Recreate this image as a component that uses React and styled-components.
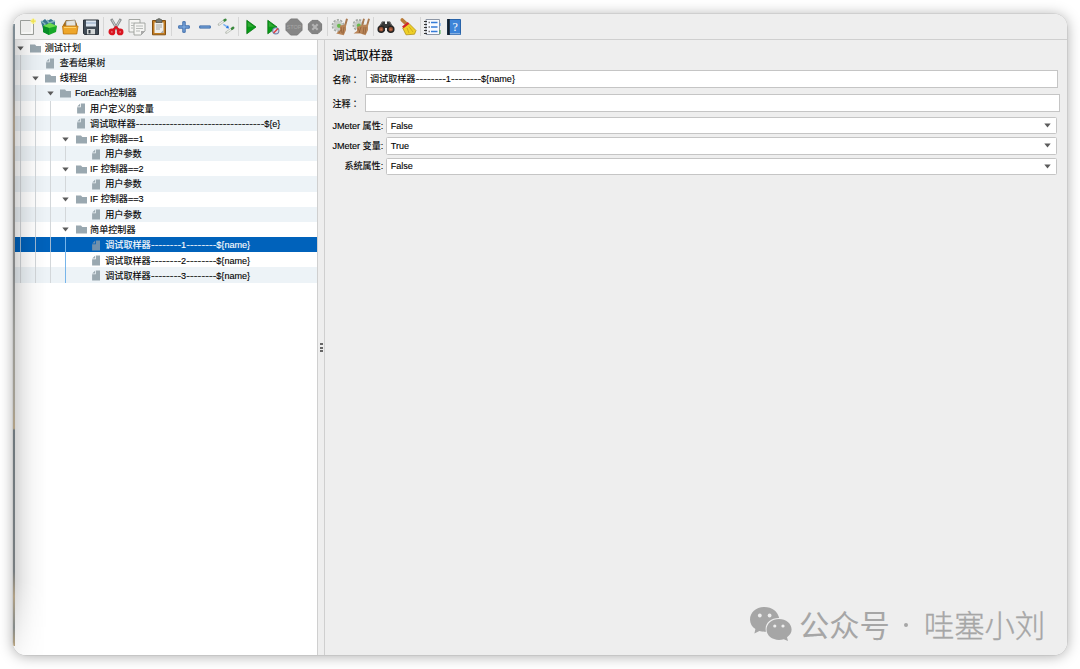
import React from "react";
import styled, { createGlobalStyle } from "styled-components";

const Global = createGlobalStyle`
  * { box-sizing: border-box; }
  body { margin: 0; background: #fff; overflow: hidden; }
`;

const Desktop = styled.div`
  width: 1080px;
  height: 669px;
  padding: 14px 13px 13.5px 13px;
  overflow: hidden;
  font: 9.1px/15px "Liberation Sans", "Noto Sans CJK SC", sans-serif;
  -webkit-text-stroke: 0.12px currentColor;
  color: #000;
`;

const Window = styled.div`
  position: relative;
  width: 1054px;
  height: 641px;
  border-radius: 13px;
  overflow: hidden;
  background: #eee;
  display: flex;
  flex-direction: column;
`;

const Shadow = styled.div`
  border-radius: 13px;
  box-shadow: 0 0 0 0.5px rgba(0, 0, 0, 0.1), 0 1px 14px rgba(0, 0, 0, 0.34);
`;

const EdgeShade = styled.div`
  position: absolute;
  inset: 26px auto 0 0;
  width: 34px;
  pointer-events: none;
  background: linear-gradient(90deg, rgba(0, 0, 0, 0.17) 2px, rgba(0, 0, 0, 0.09) 10px, rgba(0, 0, 0, 0.03) 20px, transparent);
  mask-image: linear-gradient(#000 88%, rgba(0, 0, 0, 0.2));
`;

const EdgeStrip = styled.div`
  position: absolute;
  inset: 10px auto 9px 0;
  width: 2px;
  background: linear-gradient(#7d8b93, #858b90 10%, #a39684 16%, #8c8984 26%, #858788 40%, #9b9b96 50%, #a39e92 61%, #b0a084 65%, #6e777c 65.3%, #777d80 88%, #b0a084 92%, #858b8b 97%, #b5a17d);
`;

const Toolbar = styled.div`
  height: 26px;
  flex: none;
  display: flex;
  align-items: center;
  padding-left: 3.6px;
  border-bottom: 1px solid #cfcfcf;
`;

const Tool = styled.div`
  width: 21.35px;
  height: 20px;
  flex: none;
  display: flex;
  align-items: center;
  justify-content: center;
  svg { width: 18px; height: 18px; display: block; overflow: visible; }
`;

const Separator = styled.div`
  width: 1px;
  height: 19px;
  flex: none;
  background: #d6d6d6;
  margin: 0 1.25px;
`;

const Body = styled.div`
  flex: 1;
  display: flex;
  min-height: 0;
`;

const Tree = styled.div`
  width: 305px;
  flex: none;
  background: #fff;
  border-right: 1px solid #cfcfcf;
`;

const Row = styled.div`
  height: 15.17px;
  display: flex;
  align-items: center;
  padding-left: 2px;
  white-space: pre;
  background: ${(p) => (p.$selected ? "#0062bb" : p.$striped ? "#edf3f7" : "#fff")};
  color: ${(p) => (p.$selected ? "#fff" : "#000")};
`;

const Guide = styled.span`
  width: 15.15px;
  align-self: stretch;
  flex: none;
  padding-left: 5px;
  display: flex;
  &::before {
    content: "";
    width: 1px;
    background: ${(p) => (p.$active ? "#77b5ea" : p.$selected ? "#9fb9d2" : "#d3d7da")};
  }
`;

const Toggle = styled.span`
  width: 15.15px;
  flex: none;
  display: flex;
  padding: 1px 0 0 2px;
`;

const NodeIcon = styled.span`
  width: 14.5px;
  flex: none;
  display: flex;
  padding-top: 1px;
  svg { display: block; }
`;

const Dashes = styled.span`
  font-family: Inter, sans-serif;
  letter-spacing: -0.4px;
`;

const Name = styled.span`
  padding-top: 1.6px;
`;

const Splitter = styled.div`
  width: 7px;
  flex: none;
  border-right: 1px solid #cfcfcf;
  display: flex;
  flex-direction: column;
  align-items: center;
  justify-content: center;
  gap: 1.4px;
  background: #eee;
`;

const Grip = styled.i`
  width: 3px;
  height: 2px;
  background: #666;
`;

const Panel = styled.div`
  flex: 1;
  padding: 7px 0 0 7.4px;
  display: flex;
  flex-direction: column;
`;

const Title = styled.h1`
  margin: 0;
  padding-top: 1px;
  font-size: 12.1px;
  line-height: 17px;
  font-weight: 400;
  height: 23px;
`;

const Field = styled.div`
  display: flex;
  align-items: center;
  height: 18px;
  margin-bottom: ${(p) => p.$below}px;
`;

const Label = styled.label`
  width: ${(p) => p.$w}px;
  flex: none;
  white-space: pre;
  letter-spacing: -0.03px;
  padding-top: 1px;
  text-align: ${(p) => (p.$right ? "right" : "left")};
  padding-right: ${(p) => (p.$right ? 3 : 0)}px;
`;

const Colon = styled.span`
  font-family: "Noto Sans CJK TC", sans-serif;
`;

const Input = styled.div`
  width: ${(p) => p.$w}px;
  height: 18px;
  border: 1px solid #c5c5c5;
  background: #fff;
  padding-left: 3px;
  line-height: 16px;
  white-space: pre;
`;

const Select = styled.div`
  width: 671px;
  height: 17.5px;
  border: 1px solid #c5c5c5;
  border-radius: 1.5px;
  background: #fff;
  padding: 1px 5px 0 3.5px;
  display: flex;
  align-items: center;
  justify-content: space-between;
  svg { margin-top: -1px; }
`;

const Watermark = styled.div`
  position: absolute;
  left: 735.5px;
  top: 589px;
  display: flex;
  align-items: center;
  color: #a6a6a6;
  font: 30.3px/42px "Noto Sans CJK SC", sans-serif;
  -webkit-text-stroke: 0;
  white-space: pre;
  svg { display: block; margin-right: 7.5px; }
`;

const Dot = styled.span`
  width: 34px;
  display: flex;
  justify-content: center;
  padding-top: 2px;
  &::before {
    content: "";
    width: 4px;
    height: 4px;
    border-radius: 50%;
    background: currentColor;
    margin-right: 2px;
  }
`;

const Nick = styled.span`
  font-weight: 300;
  -webkit-text-stroke: 0.35px currentColor;
`;

const Arrow = () => (
  <svg width="7" height="5" viewBox="0 0 7 5"><path d="M.3 .4H6.7L3.5 4.6Z" fill="#5c5c5c" /></svg>
);

const Folder = () => (
  <svg width="11" height="9" viewBox="0 0 11 9"><path d="M0 .5H5L6.3 2H11V8.5H0Z" fill="#9aa8b0" /></svg>
);

const Page = ({ selected }) => (
  <svg width="11" height="11" viewBox="0 0 11 11">
    <path d="M4.8 .4H9V10.4H1.1V4.3H4.8Z" fill={selected ? "#7191ac" : "#9aa8b0"} />
    <path d="M4 .7V3.5H1.2Z" fill={selected ? "#7191ac" : "#9aa8b0"} />
  </svg>
);

const icons = {
  blank: <svg viewBox="0 0 18 18"><path d="M2.5 2.5H15.5V16.5H2.5Z" fill="#ececea" stroke="#999c98" /><path d="M4 15H14V5" fill="none" stroke="#fff" /><circle cx="15.2" cy="3.2" r="2.7" fill="#f8f4ad" /><path d="M15.2 .8V5.6M12.8 3.2H17.6" stroke="#eddf48" strokeWidth="1.2" /></svg>,
  templates: <svg viewBox="0 0 18 18"><path d="M1 4 5 1 7 3 11 1 15 4V10L8 13 3 11Z" fill="#39758d" /><path d="M1 3 5 6 4 11M7 2 9 5 15 3" stroke="#84b4bd" strokeWidth="1.5" fill="none" /><path d="M3 8 10 5 17 8 16 14 9 17 3 14Z" fill="#17a829" /><path d="M3 8 9 10 17 8 10 5Z" fill="#6eda4f" /><path d="M9 10V17L3 14V8Z" fill="#078d27" /></svg>,
  open: <svg viewBox="0 0 18 18"><path d="M2 7 5 2H14L16 6V16H2Z" fill="#a86c16" /><path d="M5 3 14 2 15 9H5Z" fill="#e4e4e0" stroke="#8d8980" strokeWidth=".7" /><path d="M1.5 8H17L15.8 16H2.4Z" fill="#eea62a" stroke="#ba7410" strokeWidth=".8" /><path d="M3 9.5H15" stroke="#ffd36a" /></svg>,
  save: <svg viewBox="0 0 18 18"><path d="M1.5 2H16.5V16.5H2.5L1.5 15.3Z" fill="#414b55" stroke="#2b333b" /><path d="M4 2.4H14V8.6H4Z" fill="#dce5ee" /><path d="M4 5H14" stroke="#8da6c4" /><path d="M5 11H13V16.3H5Z" fill="#d4d8d8" /><path d="M6.5 12H8.5V15.5H6.5Z" fill="#303840" /></svg>,
  cut: <svg viewBox="0 0 18 18"><path d="M4.2 1 10.7 12M13.8 1 7.3 12" stroke="#8e9494" strokeWidth="2.6" /><path d="M5 2 10 11M13 2 8 11" stroke="#e7e9e9" strokeWidth=".7" /><g fill="#f4d7d7" stroke="#d91520" strokeWidth="2.8"><ellipse cx="4.9" cy="13.9" rx="2" ry="2" /><ellipse cx="13.1" cy="13.9" rx="2" ry="2" /></g><path d="M6 12 9 9 12 12" stroke="#d91520" strokeWidth="2.2" fill="none" /></svg>,
  copy: <svg viewBox="0 0 18 18"><g fill="#f5f5f3" stroke="#9b9e9a" strokeWidth=".9"><path d="M1 1.5H12V14H1Z" /><path d="M6 5H17V13L13 17H6Z" /></g><path d="M3 5H6M3 7.5H6M3 10H5M8 8H15M8 10.5H15M8 13H12" stroke="#b7bab7" /><path d="M13 17V13H17Z" fill="#aaa" /></svg>,
  paste: <svg viewBox="0 0 18 18"><path d="M2.5 2.5H15.5V16.8H2.5Z" fill="#c17c20" stroke="#855012" /><path d="M4.5 4.5H13.5V15H4.5Z" fill="#eeeeeb" /><path d="M6 2 9 .5 12 2V4.5H6Z" fill="#75776f" stroke="#4d504b" strokeWidth=".7" /><path d="M6 7H12M6 9H12M6 11H10" stroke="#a6a8a4" /><path d="M13.5 12 10.5 15H13.5Z" fill="#aaa" /></svg>,
  plus: <svg viewBox="0 0 18 18"><path d="M7.8 3.7H10.2V7.8H14.3V10.2H10.2V14.3H7.8V10.2H3.7V7.8H7.8Z" fill="#79a5da" stroke="#3263a5" strokeWidth=".9" /></svg>,
  minus: <svg viewBox="0 0 18 18"><path d="M3.7 7.9H14.3V10.1H3.7Z" fill="#79a5da" stroke="#3263a5" strokeWidth=".9" /></svg>,
  toggle: <svg viewBox="0 0 18 18"><path d="M2 6.5 8 2M9.5 14.5 16 10" stroke="#b5bab2" strokeWidth="2.6" strokeLinecap="round" /><path d="M2 6.5 8 2M9.5 14.5 16 10" stroke="#eef0ec" strokeWidth="1.2" /><path d="M7.5 2.4 8.5 1.8M15 10.7 16.2 9.8" stroke="#3a8a3d" strokeWidth="2.4" strokeLinecap="round" /><path d="M6.4 6.3 11 9.4" stroke="#7bb2f1" strokeWidth="1.5" /><path d="M12 10.5 8.8 10 11 7.3Z" fill="#2874e0" /></svg>,
  start: <svg viewBox="0 0 18 18"><path d="M4.8 2.3 14 9 4.8 15.8Z" fill="#079b17" stroke="#067312" strokeWidth=".8" /><path d="M5.7 4 11.7 8.7H5.7Z" fill="#32a936" /></svg>,
  noTimers: <svg viewBox="0 0 18 18"><path d="M3.8 2.3 13 9 3.8 15.8Z" fill="#079b17" stroke="#067312" strokeWidth=".8" /><path d="M4.8 4 10.7 8.7H4.8Z" fill="#32a936" /><circle cx="11.8" cy="12.8" r="3.1" fill="#d9dfef" stroke="#6f82ab" strokeWidth="1.1" /><path d="M9.6 15 14 10.6" stroke="#df3b3b" strokeWidth="1.4" /></svg>,
  stop: <svg viewBox="0 0 18 18"><path d="M5.7 1H12.3L17 5.7V12.3L12.3 17H5.7L1 12.3V5.7Z" fill="#868686" stroke="#7c7c7c" /><text x="9" y="11.2" textAnchor="middle" fontSize="5.6" fontFamily="Liberation Sans" fill="#a6a6a6">STOP</text></svg>,
  shutdown: <svg viewBox="0 0 18 18"><path d="M6 2.4H12L15.6 6V12L12 15.6H6L2.4 12V6Z" fill="#848484" stroke="#7a7a7a" /><path d="M6.3 6.3 11.7 11.7M11.7 6.3 6.3 11.7" stroke="#b3b3b3" strokeWidth="2.2" /></svg>,
  clear: <svg viewBox="0 0 18 18"><circle cx="7" cy="7.5" r="4.8" fill="#c8ccc7" /><circle cx="7" cy="7.5" r="5.6" fill="none" stroke="#a3a8a3" strokeWidth="1.6" strokeDasharray="2.2 1.3" /><circle cx="8" cy="7.8" r="2.1" fill="#68b94e" /><path d="M16 .8 14 8" stroke="#a97950" strokeWidth="2" /><path d="M9 7.5 15 6.5V12L12.8 17.3 5.2 15.5 9 12Z" fill="#b98558" /><path d="M10 9 11 15M13 9 12 16M8 15 10 12" stroke="#84562f" strokeWidth=".6" /></svg>,
  clearAll: <svg viewBox="0 0 18 18"><circle cx="6.5" cy="7" r="4.4" fill="#c8ccc7" /><circle cx="6.5" cy="7" r="5.2" fill="none" stroke="#a3a8a3" strokeWidth="1.6" strokeDasharray="2.2 1.3" /><circle cx="6.8" cy="7.4" r="2" fill="#68b94e" /><path d="M12 .8 10 8M17 .8 15 8" stroke="#a97950" strokeWidth="1.9" /><path d="M5 9 10 7 16 6.5V12L13.5 17.3 8.5 15.5 1.5 15.5 5 13Z" fill="#b98558" /><path d="M6 10 8 15M9 9 7 15M12 9 11 16M14 9 13 16" stroke="#84562f" strokeWidth=".6" /></svg>,
  search: <svg viewBox="0 0 18 18"><path d="M5 3.5H8V6H10V3.5H13L16.8 10V13H10V10H8V13H1.2V10Z" fill="#383938" /><path d="M5.5 4 3 8M12.5 4 15 8" stroke="#777" strokeWidth=".8" /><g fill="#965033" stroke="#242424" strokeWidth="1.5"><circle cx="4.2" cy="11.3" r="3" /><circle cx="13.8" cy="11.3" r="3" /></g><g fill="#c47453"><circle cx="4.2" cy="11.5" r="1" /><circle cx="13.8" cy="11.5" r="1" /></g></svg>,
  broom: <svg viewBox="0 0 18 18"><path d="M3.2 2 7.5 6" stroke="#b97c38" strokeWidth="3.6" strokeLinecap="round" /><path d="M3.7 10 10 5.5 17 12.5 15.5 16.2 7 16.8Z" fill="#efd026" stroke="#b3921a" strokeWidth=".8" /><path d="M3.8 9.4 9.6 4.8" stroke="#d42929" strokeWidth="2.3" /><path d="M8 10 10 15M10 8.5 14 14" stroke="#b59419" strokeWidth=".6" /></svg>,
  helper: <svg viewBox="0 0 18 18"><path d="M3 1.5H16.5V16.5H3Z" fill="#f8faff" stroke="#8c96a5" /><path d="M8 4.5H14.5M8 9H14.5M8 13.5H14.5" stroke="#357bd7" strokeWidth="1.6" /><path d="M1 3.5H4M1 6.5H4M1 9.5H4M1 12.5H4M1 15.5H4" stroke="#333" /><path d="M5.5 4.5H7M5.5 9H7M5.5 13.5H7" stroke="#777" strokeWidth="1.5" /><path d="M17 5V8" stroke="#4c8ee0" /><path d="M17 12V16" stroke="#45a849" /></svg>,
  help: <svg viewBox="0 0 18 18"><path d="M2.5 1.5H15.5V16.5H2.5Z" fill="#3d84d8" stroke="#2863a9" /><path d="M3.5 1V17" stroke="#16212c" strokeWidth="2.6" /><path d="M5 15.8H15.2" stroke="#a8c4e6" /><text x="10.2" y="13" textAnchor="middle" fontSize="12" fontFamily="Liberation Serif" fill="#fff">?</text></svg>,
};

const tools = [
  "blank", "templates", "open", "save", null,
  "cut", "copy", "paste", null,
  "plus", "minus", "toggle", null,
  "start", "noTimers", "stop", "shutdown", null,
  "clear", "clearAll", null,
  "search", "broom", null,
  "helper", "help",
];

const nodes = [
  { depth: 0, folder: true, text: "测试计划" },
  { depth: 1, text: "查看结果树" },
  { depth: 1, folder: true, text: "线程组" },
  { depth: 2, folder: true, text: "ForEach控制器" },
  { depth: 3, text: "用户定义的变量" },
  { depth: 3, text: "调试取样器----------------------------------${e}" },
  { depth: 3, folder: true, text: "IF 控制器==1" },
  { depth: 4, text: "用户参数" },
  { depth: 3, folder: true, text: "IF 控制器==2" },
  { depth: 4, text: "用户参数" },
  { depth: 3, folder: true, text: "IF 控制器==3" },
  { depth: 4, text: "用户参数" },
  { depth: 3, folder: true, text: "简单控制器" },
  { depth: 4, text: "调试取样器--------1--------${name}", selected: true, active: true },
  { depth: 4, text: "调试取样器--------2--------${name}", active: true },
  { depth: 4, text: "调试取样器--------3--------${name}", active: true },
];

const NodeText = ({ children }) => (
  <Name>
    {children.split(/(-+)/).map((part, i) => (part[0] === "-" ? <Dashes key={i}>{part}</Dashes> : part))}
  </Name>
);

const TreeRow = ({ node, index }) => (
  <Row $striped={index % 2 === 1} $selected={node.selected}>
    {Array.from({ length: node.depth }, (_, i) => (
      <Guide key={i} $selected={node.selected} $active={i === 3 && node.active} />
    ))}
    <Toggle>{node.folder && <Arrow />}</Toggle>
    <NodeIcon>{node.folder ? <Folder /> : <Page selected={node.selected} />}</NodeIcon>
    <NodeText>{node.text}</NodeText>
  </Row>
);

const WeChat = () => (
  <svg width="43" height="36" viewBox="0 0 43 36">
    <path d="M15.5 1C7 1 1 6.5 1 13.4C1 17.3 3 20.8 6.4 23L5.4 27.5L10.4 25C12.5 25.7 14.5 25.9 17 25.7C15 17.5 21.5 11.8 30.2 12C28.8 5.4 22.8 1 15.5 1Z" fill="#a6a6a6" />
    <path d="M30 13C23 13 17.5 17.6 17.5 23.6C17.5 29.5 23 34 30 34C31.8 34 33.3 33.7 34.8 33.2L39 35L38 31.2C41 29.4 42.6 26.8 42.6 23.6C42.6 17.6 37 13 30 13Z" fill="#a6a6a6" />
    <g fill="#eee"><circle cx="10.8" cy="9.5" r="1.9" /><circle cx="20.6" cy="9.5" r="1.9" /><circle cx="25.8" cy="20" r="1.6" /><circle cx="34" cy="20" r="1.6" /></g>
  </svg>
);

export default function App() {
  return (
    <Desktop>
      <Global />
      <Shadow>
        <Window>
          <Toolbar>
            {tools.map((tool, i) => (tool ? <Tool key={i}>{icons[tool]}</Tool> : <Separator key={i} />))}
          </Toolbar>
          <Body>
            <Tree>
              {nodes.map((node, i) => <TreeRow key={i} node={node} index={i} />)}
            </Tree>
            <Splitter><Grip /><Grip /><Grip /></Splitter>
            <Panel>
              <Title>调试取样器</Title>
              <Field $below={6}>
                <Label $w={33.6}>名称<Colon>：</Colon></Label>
                <Input $w={692}><NodeText>{"调试取样器--------1--------${name}"}</NodeText></Input>
              </Field>
              <Field $below={4.5}>
                <Label $w={32.6}>注释<Colon>：</Colon></Label>
                <Input $w={695} />
              </Field>
              <Field $below={2.4}><Label $w={53.8} $right>JMeter 属性:</Label><Select>False<Arrow /></Select></Field>
              <Field $below={2.4}><Label $w={53.8} $right>JMeter 变量:</Label><Select>True<Arrow /></Select></Field>
              <Field $below={0}><Label $w={53.8} $right>系统属性:</Label><Select>False<Arrow /></Select></Field>
            </Panel>
          </Body>
          <EdgeShade />
          <EdgeStrip />
          <Watermark><WeChat />公众号<Dot /><Nick>哇塞小刘</Nick></Watermark>
        </Window>
      </Shadow>
    </Desktop>
  );
}
